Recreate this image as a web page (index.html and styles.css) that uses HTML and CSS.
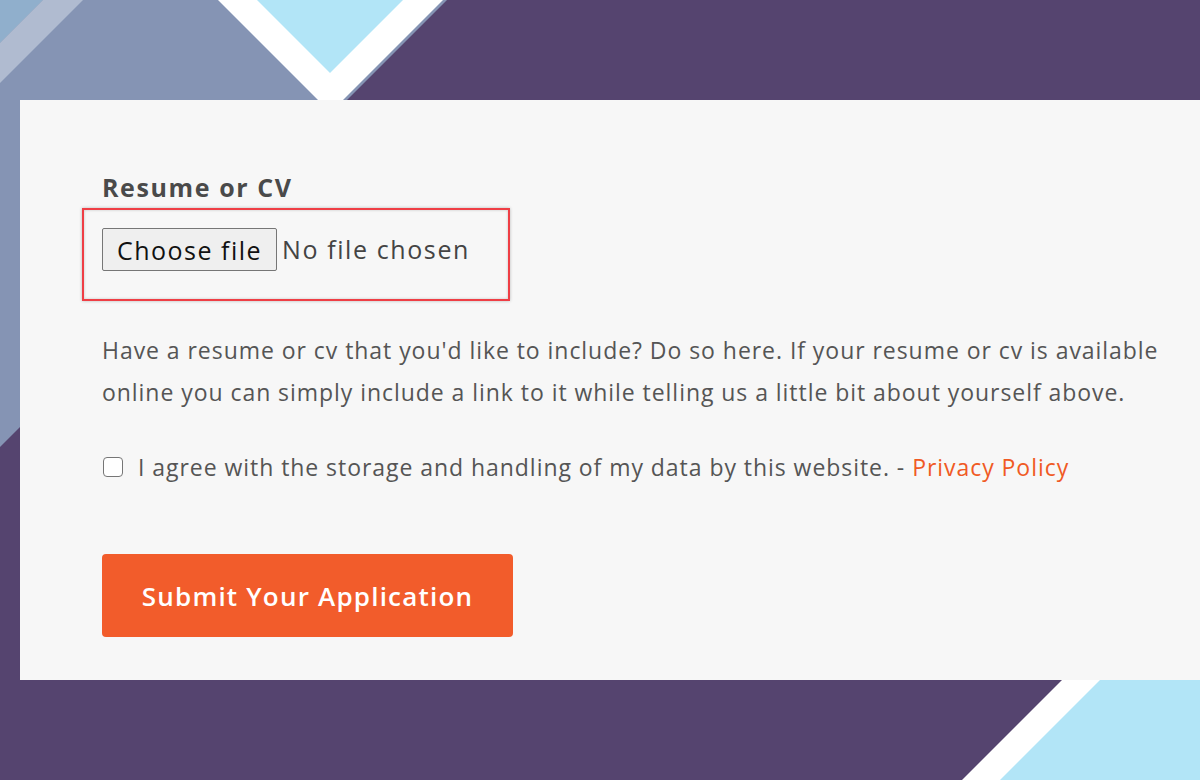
FILE: index.html
```html
<!DOCTYPE html>
<html lang="en">
<head>
<meta charset="utf-8">
<title>Resume or CV</title>
<link rel="stylesheet" href="styles.css">
</head>
<body>
<svg class="bg" width="1200" height="780" viewBox="0 0 1200 780" aria-hidden="true">
  <rect width="1200" height="780" fill="#55446f"/>
  <polygon points="0,0 447,0 0,447" fill="#8594b4"/>
  <polygon points="0,0 43,0 0,43" fill="#90afcc"/>
  <polygon points="43,0 83,0 0,83 0,43" fill="#b0bbd0"/>
  <polygon points="218,0 443,0 330.5,112.5" fill="#ffffff"/>
  <polygon points="257,0 403,0 330,73" fill="#b2e5f7"/>
  <polygon points="1200,542 1200,780 962,780" fill="#ffffff"/>
  <polygon points="1200,580 1200,780 1000,780" fill="#b2e5f7"/>
</svg>
<main class="card">
  <div class="field-label">Resume or CV</div>
  <div class="highlight">
    <span class="file-btn">Choose file</span><span class="file-name">No file chosen</span>
  </div>
  <p class="help">Have a resume or cv that you'd like to include? Do so here. If your resume or cv is available online you can simply include a link to it while telling us a little bit about yourself above.</p>
  <label class="agree"><span class="box"></span><span>I agree with the storage and handling of my data by this website. - <a class="policy" href="#">Privacy Policy</a></span></label>
  <button class="submit" type="button">Submit Your Application</button>
</main>
</body>
</html>
```

FILE: styles.css
```css
html, body {
  margin: 0;
  padding: 0;
}
body {
  width: 1200px;
  height: 780px;
  overflow: hidden;
  position: relative;
  background: #55446f;
  font-family: "Open Sans", "Liberation Sans", sans-serif;
}
.bg {
  position: absolute;
  left: 0;
  top: 0;
  z-index: 0;
}
.card {
  position: relative;
  z-index: 1;
  margin: 100px 0 0 20px;
  width: 1180px;
  height: 580px;
  box-sizing: border-box;
  background: #f7f7f7;
  padding: 72px 0 0 82px;
  color: #555555;
}
.field-label {
  font-size: 25px;
  font-weight: 700;
  color: #4a4a4a;
  line-height: 30px;
  height: 36px;
  letter-spacing: 1.6px;
}
.highlight {
  box-sizing: border-box;
  width: 428px;
  height: 93px;
  margin-left: -20px;
  border: 2px solid #ef3e45;
  box-shadow: 0 0 3px rgba(0,0,0,0.25), inset 0 0 3px rgba(0,0,0,0.2);
  padding: 18px 0 0 18px;
  display: flex;
  align-items: flex-start;
  gap: 5px;
}
.file-btn {
  box-sizing: border-box;
  height: 43px;
  width: 175px;
  display: flex;
  align-items: center;
  justify-content: center;
  background: #efefef;
  border: 1px solid #767676;
  border-radius: 2px;
  color: #111111;
  font-size: 25px;
  letter-spacing: 1.5px;
}
.file-name {
  height: 43px;
  line-height: 43px;
  font-size: 25px;
  color: #444444;
  letter-spacing: 1.6px;
}
.help {
  margin: 28px 0 0 0;
  font-size: 23px;
  line-height: 42px;
  width: 1080px;
  color: #555555;
  letter-spacing: 0.95px;
}
.agree {
  display: flex;
  align-items: center;
  gap: 15px;
  margin-top: 33px;
  height: 42px;
  font-size: 23px;
  color: #555555;
  letter-spacing: 0.95px;
}
.box {
  box-sizing: border-box;
  width: 20px;
  height: 20px;
  margin-left: 1px;
  border: 1px solid #767676;
  border-radius: 4px;
  background: #ffffff;
  flex: none;
}
.policy {
  color: #f05a24;
  text-decoration: none;
}
.submit {
  display: block;
  margin-top: 66px;
  width: 411px;
  height: 83px;
  border: none;
  border-radius: 4px;
  background: #f25c2b;
  color: #ffffff;
  font-family: "Open Sans", "Liberation Sans", sans-serif;
  font-size: 26px;
  font-weight: 600;
  letter-spacing: 1.2px;
  padding: 0;
}
```
